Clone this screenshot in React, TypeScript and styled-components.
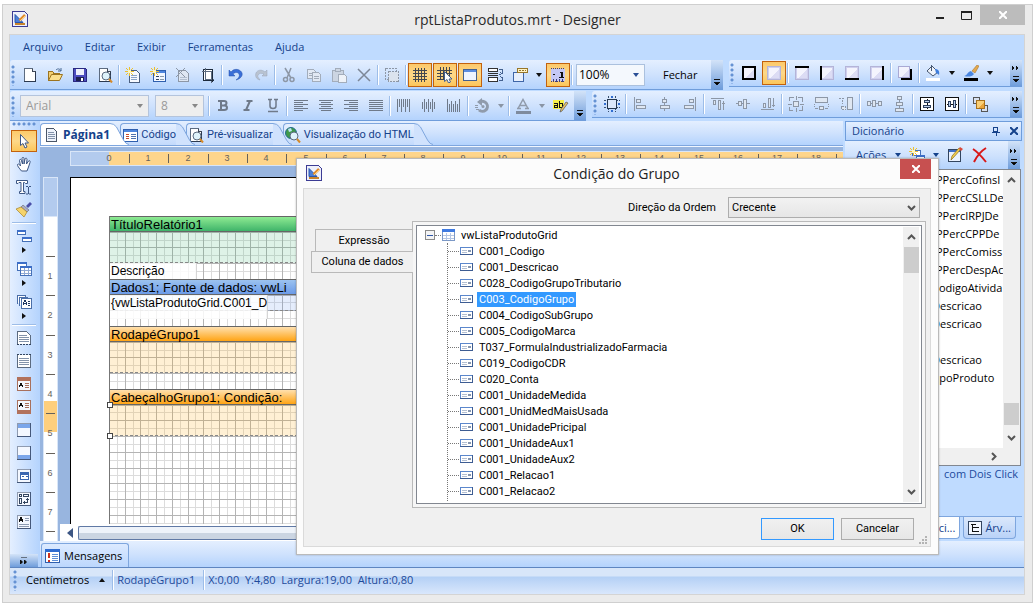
import React from 'react';
import styled, { createGlobalStyle, css } from 'styled-components';

const ui = '"Open Sans", "Noto Sans", sans-serif';
const sans = '"Liberation Sans", Arial, sans-serif';
const navy = '#15428b';
const barFill = 'linear-gradient(#e4efff, #cfe2fd 50%, #b4d3fd)';
const overflowFill = 'linear-gradient(#d3e3f8, #6f9ddb)';

const Global = createGlobalStyle`
  * { box-sizing: border-box; }
  body { margin: 0; background: #fff; font: 11px/16px ${ui}; color: #000; overflow: hidden; }
  button, select { font: inherit; color: inherit; margin: 0; padding: 0; border: 0; background: none; border-radius: 0; }
  svg { display: block; flex: none; }
`;

/* ---------- icons ---------- */

const G = '#8d97a6';
const page = (
  <>
    <path d="M2.5 1.5h8l3 3v10h-11z" fill="#fff" stroke="#5c6b80" />
    <path d="M13.5 4v10.500M2 14.500h12" stroke="#2c3a50" />
    <path d="M10.5 1.5v3h3" fill="#dfe6f2" stroke="#3d4757" />
  </>
);
const star = (
  <>
    <path d="M4.500 0v9M0 4.500h9M1 1l7 7M8 1l-7 7" stroke="#edc02c" fill="none" />
    <rect x="3" y="3" width="3" height="3" fill="#fff6b8" />
  </>
);
const box = (
  <>
    <rect x="2" y="2" width="12" height="12" fill="#cfd0ee" />
    <rect x="3" y="3" width="10" height="10" fill="#f4f4fd" />
    <path d="M13 4v9H4z" fill="#dcdcf4" />
  </>
);
const lens = (
  <>
    <circle cx="9" cy="9" r="4" fill="#dff3fb" stroke="#5c6b80" shapeRendering="auto" />
    <path d="M12 12l3 3.500" stroke="#d58a2a" strokeWidth="2" shapeRendering="auto" />
  </>
);
const lines = (ys: number[][], c: string) => (
  <path d={ys.map(([x, y, w]) => `M${x} ${y}.5h${w}`).join('')} stroke={c} fill="none" />
);
const bars = (xs: number[][], c: string) => (
  <path d={xs.map(([x, y, h]) => `M${x}.5 ${y}v${h}`).join('')} stroke={c} fill="none" />
);
const card = (
  <>
    <rect x="1.500" y="1.500" width="13" height="13" fill="#f4f8ff" stroke="#8f9bb0" />
    <path d="M1 14.500h14M14.500 1v14" stroke="#45587a" />
  </>
);

const icons: Record<string, React.ReactNode> = {
  app: (
    <>
      <path d="M.5 .5h12l3 3v12h-15z" fill="#eef0fb" stroke="#3c3c94" />
      <path d="M3 3.500v8h8z" fill="#4c7fd6" stroke="#2a57ae" shapeRendering="auto" />
      <path d="M7.500 9.500L13 4" stroke="#e08a2c" strokeWidth="2.500" shapeRendering="auto" />
      <path d="M8 10l5-5" stroke="#ffd27c" shapeRendering="auto" />
      <path d="M3 12.500h10" stroke="#c9832b" strokeWidth="2" />
    </>
  ),
  newDoc: page,
  open: (
    <>
      <path d="M1.500 13.500v-9h4l1 1.500h6v3" fill="#f3cf72" stroke="#9c7420" />
      <path d="M1.500 13.500l3-6h11l-3 6z" fill="#fbdf8d" stroke="#9c7420" shapeRendering="auto" />
      <path d="M9 3c2-2 4-1 5 1M14 1v3h-3" stroke="#4b6a93" fill="none" shapeRendering="auto" />
    </>
  ),
  save: (
    <>
      <path d="M1.500 1.500h12l1 1v12h-13z" fill="#4d4dc0" stroke="#2a2a80" />
      <rect x="4" y="2" width="8" height="6" fill="#eef0fc" />
      <rect x="4" y="10" width="8" height="4" fill="#1d2050" />
      <rect x="9" y="11" width="2" height="3" fill="#fff" />
    </>
  ),
  preview: <>{page}{lens}</>,
  newPage: (
    <>
      <path d="M4.500 3.500h7l3 3v9h-10z" fill="#f7faff" stroke="#4a5f80" />
      {lines([[6, 8, 6], [6, 10, 6], [6, 12, 6]], '#8aa4c8')}
      {star}
    </>
  ),
  newForm: (
    <>
      <rect x="3.500" y="3.500" width="12" height="11" fill="#f2f7ff" stroke="#2f5fae" />
      <rect x="4" y="4" width="11" height="2" fill="#4e86de" />
      <path d="M6 9.500h3M6 12.500h3" stroke="#33455f" />
      <path d="M10 9.500h4M10 12.500h4" stroke="#899aaa" />
      {star}
    </>
  ),
  delPage: (
    <>
      <path d="M3.500 3.500h7l3 3v8h-10z" fill="#dfe7f3" stroke={G} />
      {lines([[5, 10, 7], [5, 12, 7]], '#b3bfd0')}
      <path d="M1 1l9 9M10 1l-9 9" stroke={G} shapeRendering="auto" />
    </>
  ),
  pageSetup: (
    <>
      <rect x="3.500" y="2.500" width="9" height="11" fill="#fff" stroke="#1d2a3c" />
      <path d="M5.500 1v13M11.500 4v12M2 4.500h9M5 12.500h9" stroke="#5c6b80" />
      <path d="M12.500 2v13M3 13.500h11" stroke="#1d2a3c" />
    </>
  ),
  undo: (
    <path d="M1 3v6h6l-2-2c2-2 5-2 6 0s0 4-3 6c4-1 7-4 6-7S7 0 3 5z" fill="#3b6fd8" stroke="#2450a8" strokeWidth=".5" shapeRendering="auto" />
  ),
  redo: (
    <path d="M14 3v6H9l2-2C9 6 6 6 5 8s1 3 2 5C3 12 2 9 3 6s6-4 9-1z" fill="#b9c3d1" stroke="#98a3b4" strokeWidth=".5" shapeRendering="auto" />
  ),
  cut: (
    <g fill="none" stroke={G} strokeWidth="1.500" shapeRendering="auto">
      <path d="M4 1l6 10M10 1l-4 10" />
      <circle cx="4.500" cy="12.500" r="2" />
      <circle cx="11" cy="12.500" r="2" />
    </g>
  ),
  copy: (
    <g fill="#e2e9f4" stroke="#a3adbb">
      <path d="M1.500 2.500h6l2 2v7h-8z" />
      <path d="M6.500 5.500h6l2 2v7h-8z" />
      <path d="M8 9.500h5M8 11.500h5M3 6.500h3M3 8.500h3" />
    </g>
  ),
  paste: (
    <g fill="#ccd5e2" stroke="#a3adbb">
      <path d="M1.500 3.500h11v11h-11z" />
      <path d="M4.500 1.500h5v3h-5z" />
      <path d="M7.500 7.500h6l2 2v6h-8z" fill="#eef2f8" />
    </g>
  ),
  del: <path d="M2 2l12 12M14 2L2 14" stroke="#7d8797" strokeWidth="1.500" shapeRendering="auto" />,
  selectAll: (
    <>
      <rect x="1.500" y="1.500" width="11" height="11" fill="none" stroke={G} strokeDasharray="2 1" />
      <rect x="4.500" y="4.500" width="10" height="10" fill="#dbe3ee" stroke={G} strokeDasharray="2 1" />
    </>
  ),
  grid: <path d="M3.500 1v14M6.500 1v14M9.500 1v14M12.500 1v14M1 3.500h14M1 6.500h14M1 9.500h14M1 12.500h14" stroke="#43474f" />,
  gridCursor: (
    <>
      <path d="M3.500 0v13M6.500 0v13M9.500 0v13M12.500 0v9M0 3.500h15M0 6.500h15M0 9.500h13M0 12.500h9" stroke="#43474f" />
      <path d="M7.500 4.500v10l2.500-2 1.500 3.500 2-1-1.500-3h3z" fill="#fff" stroke="#44618f" shapeRendering="auto" />
    </>
  ),
  windowed: (
    <>
      <rect x="1.500" y="2.500" width="13" height="11" fill="#eef4ff" stroke="#44618f" />
      <rect x="2" y="3" width="12" height="2" fill="#5b8de0" />
    </>
  ),
  order: (
    <>
      <rect x="1.500" y="1.500" width="9" height="3" fill="#fff" stroke="#333" />
      <rect x="1.500" y="10.500" width="9" height="4" fill="#fff" stroke="#333" />
      <path d="M1 6.500h10M1 8.500h10" stroke="#333" />
      <path d="M12 2.500h3v4M12 13.500h3v-4M13 5l2 2M13 9l2 2M12 7.500h2" stroke="#44618f" fill="none" />
    </>
  ),
  layers: (
    <>
      <path d="M1.500 5.500h10v9h-10z" fill="#e7effc" stroke="#3f66a8" />
      <rect x="5.500" y="1.500" width="10" height="4" fill="#fff3c4" stroke="#97762a" />
      <path d="M7 3.500h7" stroke="#97762a" strokeDasharray="2 1" />
    </>
  ),
  ruler: (
    <>
      <rect x="1" y="2" width="14" height="12" fill="#c4c8f6" />
      <path d="M1 1.500h14M1 14.500h14" stroke="#3f3f7a" strokeDasharray="1 1" />
      <path d="M3.500 12v3M6.500 12v3M9.500 12v3M12.500 12v3" stroke="#3f3f7a" />
      <path d="M10 5.500h2M9 10.500h5" stroke="#111" />
      <rect x="3" y="7" width="2" height="1" fill="#111" />
      <rect x="11" y="5" width="2" height="6" fill="#111" />
    </>
  ),
  bAll: <>{box}<rect x="2" y="2" width="12" height="12" fill="none" stroke="#000" strokeWidth="2" /></>,
  bNone: <>{box}<rect x="1.500" y="1.500" width="13" height="13" fill="none" stroke="#b4b4d8" /></>,
  bTop: <>{box}<rect x="1.500" y="2.500" width="13" height="12" fill="none" stroke="#b4b4d8" /><rect x="1" y="1" width="14" height="2" /></>,
  bLeft: <>{box}<rect x="1.500" y="1.500" width="13" height="13" fill="none" stroke="#b4b4d8" /><rect x="1" y="1" width="2" height="14" /></>,
  bBottom: <>{box}<rect x="1.500" y="1.500" width="13" height="12" fill="none" stroke="#b4b4d8" /><rect x="1" y="13" width="14" height="2" /></>,
  bRight: <>{box}<rect x="1.500" y="1.500" width="12" height="13" fill="none" stroke="#b4b4d8" /><rect x="13" y="1" width="2" height="14" /></>,
  shadow: (
    <>
      <rect x="4" y="4" width="11" height="11" />
      <rect x="1.500" y="1.500" width="11" height="11" fill="#f3f3fd" stroke="#a9a9d4" />
      <path d="M12 4v8H4z" fill="#dcdcf4" />
    </>
  ),
  fill: (
    <>
      <path d="M2 6l5-5 6 6-5 4z" fill="#f0f4fb" stroke="#46566f" shapeRendering="auto" />
      <path d="M6 0v6" stroke="#46566f" />
      <path d="M10 4c3 0 5 2 4 6-1-1-2-2-3-2z" fill="#3f7edc" shapeRendering="auto" />
      <rect x="1" y="13" width="14" height="3" fill="#fff" />
    </>
  ),
  brushLine: (
    <>
      <path d="M9 6l5-6 2 1-4 7z" fill="#e4a94e" stroke="#9d6a22" strokeWidth=".5" shapeRendering="auto" />
      <path d="M1 11c3 0 3-4 7-5l3 3c-2 3-6 3-10 2z" fill="#4a86e0" shapeRendering="auto" />
      <rect x="1" y="13" width="14" height="3" />
    </>
  ),
  bold: <><path d="M3 3h6M3 12h6M6 3v9" stroke="#6f7a8a" strokeWidth="2" /><path d="M6 3h3q2.500 0 2.500 2T9 7.500H7M9 7.500q3 0 3 2.200T9 12H6" fill="none" stroke="#6f7a8a" strokeWidth="2" shapeRendering="auto" /></>,
  italic: <path d="M6.500 3h6M3.500 12h6M10 3L6 12" stroke="#6f7a8a" strokeWidth="2" shapeRendering="auto" />,
  underline: <path d="M3 1.500h4M9 1.500h4M5 2v6q0 2.500 3 2.500t3-2.500V2M3 13.500h10" fill="none" stroke="#6f7a8a" strokeWidth="1.500" shapeRendering="auto" />,
  alL: lines([[1, 2, 14], [1, 4, 9], [1, 6, 14], [1, 8, 9], [1, 10, 14], [1, 12, 9]], '#6f7a8a'),
  alC: lines([[1, 2, 14], [3, 4, 10], [1, 6, 14], [3, 8, 10], [1, 10, 14], [3, 12, 10]], '#6f7a8a'),
  alR: lines([[1, 2, 14], [6, 4, 9], [1, 6, 14], [6, 8, 9], [1, 10, 14], [6, 12, 9]], '#6f7a8a'),
  alJ: lines([[1, 2, 14], [1, 4, 14], [1, 6, 14], [1, 8, 14], [1, 10, 14], [1, 12, 14]], '#6f7a8a'),
  vT: bars([[1, 1, 13], [3, 1, 8], [5, 1, 13], [7, 1, 8], [9, 1, 13], [11, 1, 8], [13, 1, 13]], '#6f7a8a'),
  vM: bars([[1, 4, 7], [3, 1, 13], [5, 4, 7], [7, 1, 13], [9, 4, 7], [11, 1, 13], [13, 4, 7]], '#6f7a8a'),
  vB: bars([[1, 1, 13], [3, 6, 8], [5, 3, 11], [7, 6, 8], [9, 3, 11], [11, 6, 8], [13, 1, 13]], '#6f7a8a'),
  rotate: (
    <>
      <path d="M6 4a5 5 0 1 1-1 8" fill="none" stroke="#909bab" strokeWidth="3" shapeRendering="auto" />
      <path d="M8 0v8L3 4z" fill="#909bab" shapeRendering="auto" />
      <circle cx="9" cy="8.500" r="1.500" fill="#909bab" shapeRendering="auto" />
      <path d="M1 7.500h3M1 9.500h3M2 11.500h3" stroke="#909bab" />
    </>
  ),
  fontColor: (
    <>
      <path d="M3 10.500l5-9 5 9M5 7.500h6M2 10.500h4M10 10.500h4" fill="none" stroke="#909bab" strokeWidth="1.500" shapeRendering="auto" />
      <rect x="1" y="13" width="15" height="3" fill="#7e8b9e" />
    </>
  ),
  condition: (
    <>
      <rect x="0" y="2" width="11" height="9" fill="#f6f04a" />
      <path d="M1 5.500h3.500v4h-3v-2h3M6.500 3v6.500h3v-4h-3" fill="none" stroke="#111" />
      <path d="M15 5l-6 8-2 1 1-3 5-7z" fill="#e9c36a" stroke="#555" strokeWidth=".7" shapeRendering="auto" />
    </>
  ),
  alignGrid: (
    <>
      <path d="M4.500 0v16M11.500 0v16M0 4.500h16M0 11.500h16" stroke="#38506f" strokeDasharray="2 1" />
      <rect x="3.500" y="3.500" width="9" height="9" fill="#dce8fa" stroke="#26384f" />
      <path d="M7 0h2v2H7zM7 14h2v2H7zM0 7h2v2H0zM14 7h2v2h-2z" fill="#2f6cd0" />
    </>
  ),
  aLeft: <g stroke={G} fill="#dfe7f2"><path d="M2.500 1v14" /><path d="M4.500 3.500h4v3h-4zM4.500 9.500h9v3h-9z" /></g>,
  aCenter: <g stroke={G} fill="#dfe7f2"><path d="M7.500 1v14" /><path d="M5.500 3.500h4v3h-4zM3.500 9.500h9v3h-9z" /></g>,
  aRight: <g stroke={G} fill="#dfe7f2"><path d="M13.500 1v14" /><path d="M7.500 3.500h4v3h-4zM2.500 9.500h9v3h-9z" /></g>,
  aTop: <g stroke={G} fill="#dfe7f2"><path d="M1 2.500h13M13.500 14V5M12 7h3" /><path d="M3.500 4.500h2v4h-2zM8.500 4.500h2v9h-2z" /></g>,
  aMid: <g stroke={G} fill="#dfe7f2"><path d="M1 7.500h14" /><path d="M3.500 5.500h3v4h-3zM8.500 3.500h3v9h-3z" /></g>,
  aBot: <g stroke={G} fill="#dfe7f2"><path d="M1 13.500h13M13.500 2v9M12 9h3" /><path d="M3.500 7.500h2v4h-2zM8.500 2.500h2v9h-2z" /></g>,
  sSize: <g stroke={G} fill="#dfe7f2"><path d="M1.500 5v-3.500h4M10 1.500h4.500v4M14.500 10v4.500h-4M5 14.500h-3.500v-4" fill="none" /><path d="M5.500 5.500h5v5h-5z" /><path d="M0 8h4M12 8h4M8 0v4M8 12v4" /></g>,
  sWidth: <g stroke={G} fill="#dfe7f2"><path d="M2.500 1.500h12v5h-12z" /><path d="M2 12.500h3M12 12.500h3M6.500 10.500h4v3h-4z" /><path d="M1.500 8v3M15.500 8v3" strokeDasharray="1 1" /></g>,
  sHeight: <g stroke={G} fill="#dfe7f2"><path d="M9.500 1.500h5v12h-5z" /><path d="M1 2.500h6M4.500 4v4M3.500 10.500h4v3h-4z" strokeDasharray="2 1" /></g>,
  hSpace: <g stroke={G} fill="#dfe7f2"><path d="M1.500 5.500h3v4h-3zM6.500 4.500h3v6h-3zM12.500 5.500h3v4h-3z" /><path d="M5 7.500h1M10 7.500h2" /></g>,
  vSpace: <g stroke={G} fill="#dfe7f2"><path d="M6.500 .5h4v3h-4zM5.500 6.500h6v3h-6zM4.500 12.500h8v3h-8z" /><path d="M8.500 4v2M8.500 10v2" /></g>,
  cH: <g stroke="#111" fill="#fff"><path d="M1.500 1.500h13v13h-13z" /><path d="M8 3v10" /><path d="M5.500 4.500h5v2h-5zM4.500 9.500h7v2h-7z" fill="#bcd0ee" stroke="#2c3e5c" /></g>,
  cV: <g stroke="#111" fill="#fff"><path d="M1.500 1.500h13v13h-13z" /><path d="M3 8h10" /><path d="M4.500 5.500h2v5h-2zM9.500 4.500h2v7h-2z" fill="#bcd0ee" stroke="#2c3e5c" /></g>,
  front: (
    <>
      <rect x="1.500" y="1.500" width="6" height="6" fill="#d8e1ef" stroke="#555" />
      <rect x="9.500" y="9.500" width="6" height="6" fill="#d8e1ef" stroke="#555" />
      <rect x="4.500" y="4.500" width="8" height="8" fill="#f9cf76" stroke="#a8711c" />
      <path d="M12 6v6H6z" fill="#eaa53a" />
    </>
  ),
  code: (
    <>
      <rect x="1.500" y="2.500" width="14" height="12" fill="#fff" stroke="#2f5fae" />
      <rect x="2" y="3" width="13" height="2" fill="#4e86de" />
      {lines([[4, 7, 3], [4, 9, 3], [4, 11, 3]], '#c74b2c')}
      {lines([[9, 7, 5], [9, 9, 5], [9, 11, 5]], '#4e72b0')}
    </>
  ),
  doc: (
    <>
      <path d="M3.500 1.500h7l3 3v10h-10z" fill="#eef3fb" stroke="#4a5668" />
      {lines([[5, 5, 6], [5, 7, 7], [5, 9, 7], [5, 11, 7]], '#8393aa')}
    </>
  ),
  html: (
    <>
      <circle cx="6" cy="6" r="5.500" fill="#3f9a4b" stroke="#226a8e" shapeRendering="auto" />
      <path d="M3 2l3-1 1 3-3 1zM7 6l3 0 0 3-2 1z" fill="#bfe6f5" shapeRendering="auto" />
      {lens}
    </>
  ),
  cursor: <path d="M4.500 1.500v11l2.500-2 2 4.500 2-1-2-4h3.500z" fill="#fff" stroke="#3c5684" shapeRendering="auto" />,
  hand: <path d="M5.500 15C3 12 1 9.500 1.500 8.500S3.500 8 4.500 10L3.500 4.500C3.500 3 5 3 5.500 4.500L6.500 8 6 2.500C6 1 8 1 8 2.500V8l1-5c.5-1.500 2-1 2 .5L10.500 8l2-3c1-1 2 0 1.500 1.500L12.500 11l-1.500 4z" fill="#fff" stroke="#3c5684" shapeRendering="auto" />,
  text: (
    <g stroke="#3c5684" fill="#fff" shapeRendering="auto">
      <path d="M.5 1.500h11v3h-2l-1-1H7.500v9h1.500v2H3.500v-2H5V3.500H3l-1 1H.5z" />
      <path d="M10 7.500h2M13 7.500h2M12.500 8v7M10 15h2M13 15h2" fill="none" />
    </g>
  ),
  style: (
    <>
      <path d="M10 4l4-4 2 2-4 4z" fill="#4a4fa8" shapeRendering="auto" />
      <path d="M7 3l6 5-2 2-6-5z" fill="#a9adc8" stroke="#555" strokeWidth=".5" shapeRendering="auto" />
      <path d="M5 5l6 5-3 5L0 7z" fill="#f5d36b" stroke="#a58228" strokeWidth=".7" shapeRendering="auto" />
    </>
  ),
  bands: (
    <>
      <rect x="1.500" y="2.500" width="8" height="4" fill="#fff" stroke="#4470b8" />
      <rect x="1" y="2" width="9" height="2" fill="#3c6ec8" />
      <rect x="6.500" y="9.500" width="9" height="4" fill="#fff" stroke="#4470b8" />
      <rect x="6" y="9" width="10" height="2" fill="#3c6ec8" />
    </>
  ),
  tables: (
    <>
      <rect x="1.500" y="1.500" width="9" height="8" fill="#fff" stroke="#4470b8" />
      <rect x="1" y="1" width="10" height="2" fill="#3c6ec8" />
      <rect x="4.500" y="5.500" width="11" height="9" fill="#fff" stroke="#4470b8" />
      <rect x="4" y="5" width="12" height="2" fill="#3c6ec8" />
      <path d="M5 9.500h10M5 12.500h10M8.500 7v7M12.500 7v7" stroke="#8fa9d4" />
    </>
  ),
  comps: (
    <>
      <path d="M1.500 10v-8.500h8v2M3.500 12v-8.500h8v2" fill="#fff" stroke="#4a6ea8" />
      <rect x="5.500" y="4.500" width="10" height="10" fill="#fff" stroke="#4a6ea8" />
      <path d="M7 11l1.500-5h1l1.500 5M8 9.500h3M12 7.500h2M12 9.500h2M12 11.500h2" stroke="#1d3560" fill="none" />
    </>
  ),
  pageHeader: (
    <>
      <path d="M1.500 14v-12.500h9l4 4v8.500" fill="#fff" stroke="#5c6b80" />
      {lines([[3, 5, 8], [3, 7, 10], [3, 9, 10], [3, 11, 10]], '#8393aa')}
      <path d="M1 14.500h14" stroke="#33455f" strokeDasharray="2 1" />
    </>
  ),
  pageFooter: (
    <>
      <path d="M1.500 2v12.500h13V2" fill="#fff" stroke="#5c6b80" />
      {lines([[3, 5, 10], [3, 7, 10], [3, 9, 10], [3, 11, 10]], '#8393aa')}
      <path d="M1 1.500h14" stroke="#33455f" strokeDasharray="2 1" />
    </>
  ),
  titleBand: (
    <>
      {card}
      <rect x="1.500" y="1.500" width="13" height="13" fill="none" stroke="#a8705c" />
      <rect x="1" y="1" width="14" height="4" fill="#b2725c" />
      <path d="M3 11l2-4 2 4M4 9.500h3" stroke="#111" fill="none" />
      {lines([[9, 7, 4], [9, 9, 4], [9, 11, 4]], '#a8705c')}
    </>
  ),
  summaryBand: (
    <>
      {card}
      <rect x="1.500" y="1.500" width="13" height="13" fill="none" stroke="#a8705c" />
      <rect x="1" y="11" width="14" height="4" fill="#b2725c" />
      <path d="M3 8l2-4 2 4M4 6.500h3" stroke="#111" fill="none" />
      {lines([[9, 4, 4], [9, 6, 4], [9, 8, 4]], '#a8705c')}
    </>
  ),
  headBand: <>{card}<rect x="2" y="2" width="12" height="4" fill="#7ba6ea" /></>,
  footBand: <>{card}<rect x="2" y="10" width="12" height="4" fill="#7ba6ea" /></>,
  dataBand: <>{card}<rect x="4.500" y="4.500" width="8" height="7" fill="#fff" stroke="#3a66b0" /><path d="M4 5.500h9" stroke="#3a66b0" strokeWidth="2" /><path d="M6 8.500h2M10 8.500h2" stroke="#3a66b0" /></>,
  crossTab: <>{card}<path d="M3.500 3.500h2v2h-2zM7.500 3.500h5v2h-5zM3.500 7.500h2v5h-2zM8 11.500h3.500v-3M10 9l1.500-1 1.500 1M9 10l-1 1.500 1 1.500" stroke="#33455f" fill="none" /></>,
  textBox: <>{card}<path d="M3 8l2-5 2 5M4 6.500h3" stroke="#111" fill="none" />{lines([[9, 4, 4], [9, 6, 4], [3, 10, 10], [3, 12, 10]], '#8c9ab0')}</>,
  messages: (
    <>
      <rect x="1.500" y="1.500" width="14" height="13" fill="#fff" stroke="#2f5fae" />
      <rect x="1" y="1" width="15" height="3" fill="#2f6cd0" />
      <path d="M5 5v5M5 11.500v2" stroke="#d0321c" strokeWidth="2" />
      {lines([[8, 6, 6], [8, 8, 6], [8, 10, 6], [8, 12, 6]], '#5d8fd8')}
    </>
  ),
  tree: (
    <>
      <rect x="1.500" y="1.500" width="13" height="13" fill="#f4f8ff" stroke="#33455f" />
      <path d="M4 4.500h5M5.500 5v7M6 7.500h6M6 11.500h6" stroke="#111" fill="none" />
    </>
  ),
  newItem: (
    <>
      <rect x="3.500" y="3.500" width="8" height="5" fill="#fff" stroke="#4470b8" />
      <rect x="7.500" y="8.500" width="8" height="6" fill="#fff" stroke="#4470b8" />
      <rect x="7" y="8" width="9" height="2" fill="#3c6ec8" />
      {star}
    </>
  ),
  edit: (
    <>
      <rect x="1.500" y="2.500" width="12" height="12" fill="#eaf2ff" stroke="#33455f" />
      <rect x="2" y="3" width="11" height="2" fill="#3c6ec8" />
      <path d="M14 2l-8 9-2 2 1-4 7-8z" fill="#f4cf4e" stroke="#8a6a18" strokeWidth=".7" shapeRendering="auto" />
      <path d="M13 0l3 2-2 2-2-2z" fill="#d9483a" shapeRendering="auto" />
    </>
  ),
  remove: <path d="M1 2c5 3 9 8 13 13M14 1C9 4 5 9 2 15" stroke="#d81818" strokeWidth="2" fill="none" shapeRendering="auto" />,
  table: (
    <>
      <rect x="1.500" y="2.500" width="12" height="11" fill="#fff" stroke="#7b98c6" />
      <rect x="1" y="2" width="13" height="3" fill="#3f7ae0" />
      <path d="M2 8.500h11M2 11.500h11M5.500 6v7M9.500 6v7" stroke="#b5c6e4" />
    </>
  ),
  field: (
    <>
      <rect x="1.500" y="4.500" width="12" height="7" fill="#fff" stroke="#5b87cc" />
      <path d="M1 11.500h13M13.500 4v8" stroke="#3d5c92" />
      <path d="M3 7.500h5M3 9.500h5" stroke="#b3bfd2" />
      <rect x="9" y="7" width="3" height="2" fill="#8797b0" />
    </>
  ),
};

const Icon = ({ name, size = 16 }: { name: string; size?: number }) => (
  <svg width={size} height={size} viewBox="0 0 16 16" shapeRendering="crispEdges" aria-hidden="true">{icons[name]}</svg>
);
const Caret = ({ color = '#111', dir = 'down' }: { color?: string; dir?: 'down' | 'up' | 'right' }) => (
  <svg width="6" height="6" viewBox="0 0 6 6" aria-hidden="true">
    <path d={{ down: 'M0 1h6L3 5z', up: 'M0 5h6L3 1z', right: 'M1 0v6l4-3z' }[dir]} fill={color} />
  </svg>
);
const Chevron = ({ dir }: { dir: 'up' | 'down' | 'right' }) => (
  <svg width="9" height="9" viewBox="0 0 9 9" aria-hidden="true">
    <path d={{ up: 'M1 6l3.500-3.500L8 6', down: 'M1 3l3.500 3.500L8 3', right: 'M3 1l3.500 3.500L3 8' }[dir]} fill="none" stroke="#555" strokeWidth="2" />
  </svg>
);

/* ---------- window frame ---------- */

const Screen = styled.div`
  height: 100vh;
  padding: 4px 1px 2px 2px;
  position: relative;
`;
const Window = styled.div`
  height: 100%;
  display: flex;
  flex-direction: column;
  background: #ebebeb;
  border: 1px solid #cfcfcf;
  padding: 0 7px 7px 6px;
`;
const TitleBar = styled.header`
  height: 29px;
  display: flex;
  padding-left: 3px;
  flex: none;
`;
const TitleIcon = styled.span`
  padding-top: 6px;
`;
const Title = styled.h1`
  flex: 1;
  margin: 0;
  padding-left: 81px;
  text-align: center;
  font: 14px/30px ${ui};
  color: #2a2a2a;
`;
const WinButton = styled.button<{ $close?: boolean }>`
  width: ${p => (p.$close ? 45 : 27)}px;
  height: 20px;
  display: grid;
  place-items: center;
  background: ${p => (p.$close ? '#bcbcbc' : 'none')};
`;
const Client = styled.div`
  flex: 1;
  min-height: 0;
  display: flex;
  flex-direction: column;
  border: 1px solid #d4d4d4;
  background: #bfdbff;
`;
const MenuBar = styled.nav`
  height: 25px;
  display: flex;
  gap: 22px;
  padding: 4px 13px;
  flex: none;
`;
const MenuLink = styled.a`
  color: ${navy};
  text-decoration: none;
`;

/* ---------- toolbars ---------- */

const ToolbarRow = styled.div`
  display: flex;
  gap: 6px;
  height: 30px;
  padding-right: 2px;
  flex: none;
  & + & { height: 31px; padding-top: 1px; }
`;
const Toolbar = styled.div<{ $grow?: boolean }>`
  display: flex;
  align-items: center;
  height: ${p => (p.$grow ? 27 : 30)}px;
  ${p => p.$grow && 'flex: 1;'}
  background: ${barFill};
  border-bottom: 1px solid #6f9ddb;
  border-radius: 3px 3px 0 0;
`;
const Grip = styled.span<{ $flat?: boolean }>`
  flex: none;
  width: ${p => (p.$flat ? 26 : 8)}px;
  height: ${p => (p.$flat ? 9 : 22)}px;
  background: radial-gradient(circle at 3px 3px, #6592d3 1px, transparent 2px) ${p => (p.$flat ? '0 0 / 5px 9px' : '0 0 / 8px 5px')};
`;
const Tool = styled.button<{ $on?: boolean }>`
  flex: none;
  width: 24px;
  height: 24px;
  margin-right: 1px;
  display: grid;
  place-items: center;
  ${p => p.$on && css`
    background: linear-gradient(#fcc96a, #fdd88a 50%, #fcc65a);
    border: 1px solid #c2620e;
  `}
`;
const Arrow = styled.button`
  flex: none;
  width: 12px;
  height: 24px;
  margin-right: 1px;
  display: grid;
  place-items: center;
`;
const Sep = styled.span`
  flex: none;
  width: 3px;
  height: 20px;
  border-left: 1px solid #9dbde8;
  background: linear-gradient(90deg, #fff 1px, transparent 1px);
`;
const Combo = styled.span<{ $w: number; $off?: boolean }>`
  display: grid;
  align-items: center;
  width: ${p => p.$w}px;
  height: 22px;
  margin: 0 4px 0 2px;
  flex: none;
  border: 1px solid ${p => (p.$off ? '#b4c4dc' : '#abc1de')};
  background: ${p => (p.$off ? '#eeeeee' : '#f4f8fd')};
  color: ${p => (p.$off ? '#9a9a9a' : '#000')};
  font-size: 12px;
  > * { grid-area: 1 / 1; }
  > svg { justify-self: end; margin-right: 5px; pointer-events: none; }
  select { appearance: none; width: 100%; height: 20px; padding-left: ${p => (p.$off ? 5 : 2)}px; opacity: 1; }
`;
const TextTool = styled.button`
  padding: 0 14px;
`;
const Overflow = styled.button`
  width: 12px;
  align-self: stretch;
  margin-left: auto;
  background: ${overflowFill};
  display: flex;
  flex-direction: column;
  align-items: center;
  justify-content: flex-end;
  padding-bottom: 3px;
`;
const OverflowMark = ({ more }: { more?: boolean }) => (
  <svg width="8" height="18" viewBox="0 0 8 18" shapeRendering="crispEdges" aria-hidden="true">
    {more && <path d="M0 1l3 2-3 2zM4 1l3 2-3 2z" fill="#111" />}
    <path d="M1 11.500h6M1 14h6l-3 3z" stroke="#111" strokeWidth="1" />
  </svg>
);

const renderTools = (spec: string) =>
  spec.split(' ').map((t, i) => {
    if (t === '|') return <Sep key={i} />;
    if (t === 'v') return <Arrow key={i} aria-label="Mais"><Caret /></Arrow>;
    if (t === 'x') return <Arrow key={i} aria-label="Mais" disabled><Caret color="#8a95a5" /></Arrow>;
    const on = t.startsWith('*');
    const name = on ? t.slice(1) : t;
    return <Tool key={i} $on={on} aria-label={name}><Icon name={name} /></Tool>;
  });

/* ---------- work area ---------- */

const Work = styled.div`
  flex: 1;
  min-height: 0;
  display: flex;
`;
const Toolbox = styled.aside`
  flex: none;
  width: 30px;
  display: flex;
  flex-direction: column;
  align-items: center;
  padding-right: 2px;
  background: linear-gradient(90deg, #e4efff, #b4d3fd);
`;
const BoxTool = styled(Tool)<{ $tight?: boolean }>`
  width: 26px;
  height: 22px;
  margin: 0 0 ${p => (p.$tight ? 0 : 1)}px;
`;
const BoxArrow = styled.button`
  height: 11px;
  width: 26px;
  display: flex;
  justify-content: center;
  align-items: flex-start;
`;
const BoxSep = styled.span`
  width: 24px;
  height: 3px;
  border-top: 1px solid #9dbde8;
  background: linear-gradient(#fff 1px, transparent 1px);
`;
const BoxOverflow = styled.button`
  width: 28px;
  height: 13px;
  margin-top: auto;
  display: grid;
  place-items: center;
  background: ${overflowFill};
`;
const Main = styled.div`
  flex: 1;
  min-width: 0;
  display: flex;
  flex-direction: column;
`;
const Split = styled.div`
  flex: 1;
  min-height: 0;
  display: flex;
`;
const Documents = styled.section`
  flex: 1;
  min-width: 0;
  display: flex;
  flex-direction: column;
`;
const TabStrip = styled.div`
  flex: none;
  display: flex;
  height: 25px;
  padding-top: 2px;
  background: ${barFill};
  border-bottom: 1px solid #7ea6de;
`;
const DocTab = styled.button<{ $on?: boolean; $z: number }>`
  position: relative;
  z-index: ${p => p.$z};
  display: flex;
  height: 22px;
  margin-right: -9px;
  color: ${navy};
  font: ${p => (p.$on ? `700 12px/20px ${ui}` : '400 11px/20px Roboto, sans-serif')};
`;
const DocTabBody = styled.span<{ $on?: boolean }>`
  display: flex;
  align-items: center;
  gap: ${p => (p.$on ? 4 : 3)}px;
  padding-left: ${p => (p.$on ? 2 : 1)}px;
  height: 22px;
  background: ${p => (p.$on ? '#fff' : 'linear-gradient(#e6f0ff, #c3dafc)')};
  border: solid #7ea6de;
  border-width: 1px 0 0 1px;
  border-radius: 4px 0 0 0;
`;
const Canvas = styled.div`
  flex: 1;
  min-height: 0;
  display: flex;
  padding: 4px 0 0 3px;
  gap: 2px;
  background: #98b5df;
  border-top: 1px solid #f0f6ff;
`;
const VRuler = styled.div`
  flex: none;
  width: 15px;
  margin-top: 26px;
  overflow: hidden;
`;
const CanvasMain = styled.div`
  flex: 1;
  min-width: 0;
  display: flex;
  flex-direction: column;
`;
const HRuler = styled.div`
  flex: none;
  height: 15px;
  margin-left: 10px;
  overflow: hidden;
`;
const Viewport = styled.div`
  flex: 1;
  min-height: 0;
  padding: 11px 0 0 10px;
  overflow: hidden;
`;
const Sheet = styled.div`
  height: 900px;
  padding: 38px 0 0 38px;
  background: #fff;
  border: solid #000;
  border-width: 1px 0 0 1px;
`;
const Surface = styled.div`
  position: relative;
  height: 700px;
  border-left: 1px solid #777;
`;
const GridLines = styled.svg`
  position: absolute;
  inset: 0;
`;
const Bands = styled.div`
  position: relative;
  font-family: ${sans};
`;
const BandHead = styled.div<{ $fill: string }>`
  height: 16px;
  padding-left: 1px;
  border: solid #666;
  border-width: 1px 0;
  background: ${p => p.$fill};
  font-size: 13px;
  line-height: 15px;
  white-space: nowrap;
`;
const BandBody = styled.div<{ $h: number; $tint?: string }>`
  height: ${p => p.$h}px;
  background: ${p => p.$tint ?? 'none'};
  ${p => p.$tint && 'border-bottom: 1px dashed #888;'}
`;
const ReportText = styled.div<{ $w: number; $h: number }>`
  width: ${p => p.$w}px;
  height: ${p => p.$h}px;
  background: rgba(255, 255, 255, .85);
  font-size: 12px;
  line-height: 16px;
  padding-left: 1px;
  white-space: nowrap;
  border-right: 1px solid rgba(120, 120, 120, .3);
`;
const Handle = styled.span`
  position: absolute;
  left: -3px;
  width: 6px;
  height: 6px;
  background: #fff;
  border: 1px solid #444;
  &:first-child { top: -3px; }
  &:last-child { bottom: -3px; }
`;
const Selected = styled.div`
  position: relative;
`;
const DocScroll = styled.div`
  flex: none;
  height: 17px;
  display: flex;
  align-items: center;
  padding-left: 6px;
  gap: 3px;
  background: #fff;
`;
const DocThumb = styled.span`
  flex: 1;
  height: 14px;
  border: 1px solid #6079a5;
  border-right: 0;
  border-radius: 2px 0 0 2px;
  background: linear-gradient(#eef3fa 50%, #cbd5e2 50%);
`;

/* ---------- dictionary ---------- */

const Panel = styled.aside`
  flex: none;
  width: 180px;
  display: flex;
  flex-direction: column;
  padding: 0 2px 0 1px;
  margin-left: 1px;
`;
const PanelHead = styled.div`
  flex: none;
  display: flex;
  align-items: center;
  gap: 10px;
  height: 20px;
  padding: 0 3px 0 6px;
  border: 1px solid #6f9ddb;
  background: ${barFill};
  color: ${navy};
  > :first-child { flex: 1; }
`;
const PanelBar = styled.div`
  flex: none;
  display: flex;
  align-items: center;
  height: 28px;
  padding-left: 11px;
  margin-right: 2px;
  background: ${barFill};
  color: ${navy};
  > :first-child { margin-right: 6px; }
`;
const Listing = styled.div`
  flex: 1;
  min-height: 0;
  margin-right: 1px;
  display: grid;
  grid-template: minmax(0, 1fr) 17px / minmax(0, 1fr) 17px;
  background: #fff;
  border: 1px solid #828790;
`;
const FieldList = styled.ul`
  margin: 0;
  padding: 1px 0 0;
  list-style: none;
  overflow: hidden;
`;
const FieldRow = styled.li<{ $in: number }>`
  height: 18px;
  padding-left: ${p => p.$in}px;
  line-height: 18px;
  white-space: nowrap;
`;
const ScrollTrack = styled.div`
  background: #f0f0f0;
  display: flex;
  flex-direction: column;
  align-items: center;
  padding: 6px 0;
`;
const Thumb = styled.span<{ $h: number; $end?: boolean }>`
  width: 15px;
  height: ${p => p.$h}px;
  margin: ${p => (p.$end ? 'auto 0 8px' : '5px 0 auto')};
  background: #cdcdcd;
`;
const HTrack = styled.div`
  grid-column: span 2;
  background: #f0f0f0;
  display: flex;
  align-items: center;
  justify-content: flex-end;
  padding-right: 22px;
`;
const Hint = styled.p`
  flex: none;
  margin: 0;
  height: 48px;
  padding: 0 4px 0 0;
  text-align: right;
  color: #1c4a9c;
`;
const PanelTabs = styled.div`
  flex: none;
  display: flex;
  justify-content: flex-end;
  gap: 3px;
  height: 25px;
  margin-top: 2px;
  padding-right: 6px;
  border-top: 1px solid #7ea6de;
`;
const PanelTab = styled.button<{ $on?: boolean }>`
  display: flex;
  align-items: center;
  gap: 2px;
  height: 22px;
  padding: 0 4px 0 3px;
  border: 1px solid #7ea6de;
  border-top: 0;
  border-radius: 0 0 4px 4px;
  background: ${p => (p.$on ? '#fff' : 'linear-gradient(#dbe8fb, #b9d2f8)')};
  color: ${navy};
`;

/* ---------- bottom bars ---------- */

const MessageStrip = styled.div`
  flex: none;
  height: 26px;
  padding: 2px 0 0 1px;
  background: ${barFill};
`;
const MessageTab = styled.button`
  display: flex;
  align-items: center;
  gap: 4px;
  height: 24px;
  padding: 0 6px 0 2px;
  border: 1px solid #7ea6de;
  border-bottom: 0;
  border-radius: 3px 3px 0 0;
  background: linear-gradient(#dceaff, #bcd7fd);
`;
const StatusBar = styled.footer`
  flex: none;
  display: flex;
  align-items: center;
  height: 27px;
  padding: 0 2px 2px;
  border-top: 1px solid #5e86c1;
  background: linear-gradient(#d8e6f9 8px, #b4d0f5 9px, #d9e7fc);
  color: #1e4a9a;
`;
const Unit = styled.button`
  display: flex;
  align-items: center;
  gap: 10px;
  margin: 0 7px 0 6px;
  color: #000;
`;
const StatusText = styled.span`
  margin: 0 8px 0 2px;
  white-space: pre;
`;

/* ---------- dialog ---------- */

const Dialog = styled.div`
  position: absolute;
  left: 296px;
  top: 158px;
  width: 643px;
  height: 397px;
  z-index: 20;
  display: flex;
  flex-direction: column;
  padding: 0 7px 7px 6px;
  background: #fcfcfc;
  border: 1px solid #bababa;
  box-shadow: 0 0 2px rgba(0, 0, 0, .25);
`;
const DialogTitle = styled.div`
  flex: none;
  display: flex;
  height: 29px;
  padding-left: 3px;
  > :first-child { padding-top: 6px; }
  h2 { flex: 1; margin: 0; padding-left: 11px; font: 14px/29px ${ui}; text-align: center; color: #222; }
`;
const CloseButton = styled.button`
  width: 31px;
  height: 20px;
  display: grid;
  place-items: center;
  background: #c75050;
`;
const DialogBody = styled.div`
  flex: 1;
  min-height: 0;
  display: flex;
  flex-direction: column;
  padding: 8px 4px 6px 7px;
  border: 1px solid #dadada;
  background: #f0f0f0;
  font: 11px/16px Roboto, ${sans};
`;
const OrderRow = styled.div`
  display: flex;
  justify-content: flex-end;
  align-items: center;
  gap: 12px;
  padding-right: 6px;
`;
const OrderSelect = styled.span`
  display: grid;
  align-items: center;
  width: 192px;
  height: 21px;
  border: 1px solid #adadad;
  background: linear-gradient(#f2f2f2, #e6e6e6);
  > * { grid-area: 1 / 1; }
  > svg { justify-self: end; margin-right: 3px; pointer-events: none; }
  select { appearance: none; width: 100%; height: 19px; padding-left: 3px; }
`;
const DialogMain = styled.div`
  flex: 1;
  min-height: 0;
  margin-top: 3px;
  display: flex;
`;
const SideTabs = styled.div`
  flex: none;
  width: 102px;
  margin-right: -1px;
  padding-top: 8px;
  display: flex;
  flex-direction: column;
  align-items: flex-end;
  z-index: 1;
`;
const SideTab = styled.button<{ $on?: boolean }>`
  width: ${p => (p.$on ? 102 : 97)}px;
  height: 22px;
  margin-right: ${p => (p.$on ? 0 : 1)}px;
  border: solid #b9b9b9;
  border-width: ${p => (p.$on ? '1px 0 1px 1px' : '1px 0 0 1px')};
  background: #f0f0f0;
`;
const TreeFrame = styled.div`
  flex: 1;
  padding: 3px;
  display: flex;
  border: 1px solid #b9b9b9;
  background: #f6f6f6;
`;
const TreeBox = styled.div`
  flex: 1;
  min-height: 0;
  display: flex;
  padding: 1px;
  border: 1px solid #828790;
  background: #fff;
  > ${ScrollTrack} { width: 16px; margin-right: 1px; }
`;
const Tree = styled.ul`
  flex: 1;
  margin: 0;
  padding: 0 0 0 7px;
  list-style: none;
  overflow: hidden;
  ul { margin: 0 0 0 22px; padding: 0; list-style: none; border-left: 1px dotted #777; }
`;
const TreeRow = styled.span<{ $root?: boolean }>`
  display: flex;
  align-items: center;
  height: 16px;
  &::before {
    content: '';
    order: ${p => (p.$root ? 1 : 0)};
    width: ${p => (p.$root ? 6 : 11)}px;
    border-top: 1px dotted #777;
  }
  > svg:last-of-type { order: 2; }
`;
const TreeText = styled.span<{ $on?: boolean }>`
  order: 3;
  margin-left: 2px;
  padding: 0 2px;
  line-height: 15px;
  ${p => p.$on && 'background: #3399ff; color: #fff;'}
`;
const DialogFooter = styled.div`
  flex: none;
  display: flex;
  justify-content: flex-end;
  gap: 7px;
  padding: 10px 12px 0 0;
  position: relative;
`;
const PushButton = styled.button<{ $main?: boolean }>`
  width: 73px;
  height: 22px;
  border: 1px solid ${p => (p.$main ? '#3399ff' : '#acacac')};
  background: linear-gradient(#f0f0f0, #e6e6e6);
`;
const SizeGrip = styled.svg`
  position: absolute;
  right: -2px;
  bottom: -5px;
`;

/* ---------- data ---------- */

const CM = 39.3;
const fields = [
  'C001_Codigo', 'C001_Descricao', 'C028_CodigoGrupoTributario', 'C003_CodigoGrupo', 'C004_CodigoSubGrupo',
  'C005_CodigoMarca', 'T037_FormulaIndustrializadoFarmacia', 'C019_CodigoCDR', 'C020_Conta', 'C001_UnidadeMedida',
  'C001_UnidMedMaisUsada', 'C001_UnidadePricipal', 'C001_UnidadeAux1', 'C001_UnidadeAux2', 'C001_Relacao1',
  'C001_Relacao2', 'C001_PesoMedio',
];
const dictionary: [string, number][] = [
  ['PPercCofinsI', 90], ['PPercCSLLDe', 90], ['PPercIRPJDe', 90], ['PPercCPPDe', 90], ['PPercComiss', 90],
  ['PPercDespAc', 90], ['CodigoAtivida', 86], ['Descricao', 86], ['Descricao', 86], ['', 86], ['Descricao', 86], ['GrupoProduto', 74],
];
const orange = 'linear-gradient(#ffe0ae, #ffa414)';

const HorizontalRuler = () => (
  <svg width="2000" height="15" shapeRendering="crispEdges">
    <rect width="2000" height="15" fill="#d9e6f8" />
    <rect x="1" y="1" width="38" height="13" fill="#b3cbee" />
    <rect x="39" y="1" width="1960" height="13" fill="#fed58b" />
    {Array.from({ length: 19 }, (_, i) => (
      <g key={i} fill="#66615a">
        <text x={Math.round(39 + i * CM)} y="10" textAnchor="middle" fontFamily="Liberation Sans" fontSize="9">{i}</text>
        <rect x={Math.round(59 + i * CM)} y="3" width="1" height="9" />
      </g>
    ))}
  </svg>
);
const VerticalRuler = () => (
  <svg width="15" height="900" shapeRendering="crispEdges">
    <rect width="15" height="900" fill="#d9e6f8" />
    <rect x="1" y="1" width="13" height="38" fill="#b3cbee" />
    <rect x="1" y="40" width="13" height="860" fill="#fff" />
    <rect x="1" y="224" width="13" height="31" fill="#fecf7d" />
    {Array.from({ length: 8 }, (_, i) => (
      <g key={i} fill="#66615a">
        {i < 7 && <text x="7" y={Math.round(102 + i * CM)} textAnchor="middle" fontFamily="Liberation Sans" fontSize="9">{i + 1}</text>}
        <rect x="3" y={Math.round(79 + i * CM)} width="9" height="1" />
      </g>
    ))}
  </svg>
);
const SurfaceGrid = () => {
  const at = Array.from({ length: 240 }, (_, i) => ({ p: Math.round((i + 1) * CM / 5), major: i % 2 === 1 }));
  const color = (m: boolean) => (m ? '#b4b4b4' : '#dcdcdc');
  return (
    <GridLines width="1900" height="700" shapeRendering="crispEdges">
      {[false, true].map(m => at.filter(l => l.major === m).map(l => (
        <g key={l.p} fill={color(m)}>
          <rect x={l.p - 1} y="0" width="1" height="700" />
          <rect x="0" y={l.p} width="1900" height="1" />
        </g>
      )))}
    </GridLines>
  );
};

const DocumentTab = ({ icon, children, on, z }: { icon: string; children: string; on?: boolean; z: number }) => (
  <DocTab $on={on} $z={z}>
    <DocTabBody $on={on}><Icon name={icon} /><span>{children}</span></DocTabBody>
    <svg width="19" height="22" viewBox="0 0 19 22">
      <path d="M0 .5Q4 .5 6.500 4L13.500 17Q16 21.500 19 21.500V22H0z" fill={on ? '#fff' : '#d0e2fd'} />
      <path d="M0 .5Q4 .5 6.500 4L13.500 17Q16 21.500 19 21.500" fill="none" stroke="#7ea6de" />
    </svg>
  </DocTab>
);

const Cross = ({ color, size = 8, w = 2 }: { color: string; size?: number; w?: number }) => (
  <svg width={size} height={size} viewBox="0 0 8 8"><path d="M0 0l8 8M8 0L0 8" stroke={color} strokeWidth={w} /></svg>
);

export default function App() {
  return (
    <Screen>
      <Global />
      <Window>
        <TitleBar>
          <TitleIcon><Icon name="app" /></TitleIcon>
          <Title>rptListaProdutos.mrt - Designer</Title>
          <WinButton aria-label="Minimizar"><svg width="8" height="10"><rect y="7" width="8" height="2" fill="#222" /></svg></WinButton>
          <WinButton aria-label="Maximizar"><svg width="11" height="9"><path d="M.5 1h10v7.500H.5z" fill="none" stroke="#222" /><rect width="11" height="2" fill="#222" /></svg></WinButton>
          <WinButton $close aria-label="Fechar"><Cross color="#fff" /></WinButton>
        </TitleBar>
        <Client>
          <MenuBar>
            {['Arquivo', 'Editar', 'Exibir', 'Ferramentas', 'Ajuda'].map(m => <MenuLink key={m} href="#">{m}</MenuLink>)}
          </MenuBar>
          <ToolbarRow>
            <Toolbar>
              <Grip />
              {renderTools('newDoc open save preview | newPage newForm delPage pageSetup | undo redo | cut copy paste del | selectAll | *grid *gridCursor *windowed order layers v *ruler |')}
              <Combo $w={69}>
                <select aria-label="Zoom" defaultValue="100%"><option>100%</option></select>
                <Caret color="#2a4f96" />
              </Combo>
              <TextTool>Fechar</TextTool>
              <Overflow aria-label="Mais botões"><OverflowMark /></Overflow>
            </Toolbar>
            <Toolbar $grow>
              <Grip />
              {renderTools('bAll *bNone | bTop bLeft bBottom bRight | shadow | fill v brushLine v')}
              <Overflow aria-label="Mais botões"><OverflowMark more /></Overflow>
            </Toolbar>
          </ToolbarRow>
          <ToolbarRow>
            <Toolbar>
              <Grip />
              <Combo $w={129} $off>
                <select aria-label="Fonte" disabled defaultValue="Arial"><option>Arial</option></select>
                <Caret color="#888" />
              </Combo>
              <Combo $w={49} $off>
                <select aria-label="Tamanho" disabled defaultValue="8"><option>8</option></select>
                <Caret color="#888" />
              </Combo>
              {renderTools('| bold italic underline | alL alC alR alJ | vT vM vB | rotate x | fontColor x condition')}
              <Overflow aria-label="Mais botões"><OverflowMark /></Overflow>
            </Toolbar>
            <Toolbar $grow>
              <Grip />
              {renderTools('alignGrid | aLeft aCenter aRight | aTop aMid aBot | sSize sWidth sHeight | hSpace vSpace | cH cV | front')}
              <Overflow aria-label="Mais botões"><OverflowMark more /></Overflow>
            </Toolbar>
          </ToolbarRow>
          <Work>
            <Toolbox>
              <Grip $flat />
              <BoxTool $on aria-label="Selecionar"><Icon name="cursor" /></BoxTool>
              <BoxTool aria-label="Mão"><Icon name="hand" /></BoxTool>
              <BoxTool aria-label="Texto"><Icon name="text" /></BoxTool>
              <BoxTool aria-label="Estilo"><Icon name="style" /></BoxTool>
              <BoxSep />
              {['bands', 'tables', 'comps'].map(n => (
                <React.Fragment key={n}>
                  <BoxTool $tight aria-label={n}><Icon name={n} /></BoxTool>
                  <BoxArrow aria-label="Mais"><Caret dir="right" /></BoxArrow>
                </React.Fragment>
              ))}
              <BoxSep />
              {['pageHeader', 'pageFooter', 'titleBand', 'summaryBand', 'headBand', 'footBand', 'dataBand', 'crossTab', 'textBox'].map(n => (
                <BoxTool key={n} aria-label={n}><Icon name={n} /></BoxTool>
              ))}
              <BoxOverflow aria-label="Mais botões">
                <svg width="8" height="8" shapeRendering="crispEdges"><path d="M1 .5h6M0 3l3 2-3 2zM4 3l3 2-3 2z" fill="#111" stroke="#111" strokeWidth=".5" /></svg>
              </BoxOverflow>
            </Toolbox>
            <Main>
              <Split>
                <Documents>
                  <TabStrip>
                    <DocumentTab icon="doc" on z={4}>Página1</DocumentTab>
                    <DocumentTab icon="code" z={3}>Código</DocumentTab>
                    <DocumentTab icon="preview" z={2}>Pré-visualizar</DocumentTab>
                    <DocumentTab icon="html" z={1}>Visualização do HTML</DocumentTab>
                  </TabStrip>
                  <Canvas>
                    <VRuler><VerticalRuler /></VRuler>
                    <CanvasMain>
                      <HRuler><HorizontalRuler /></HRuler>
                      <Viewport>
                        <Sheet>
                          <Surface>
                            <SurfaceGrid />
                            <Bands>
                              <BandHead $fill="linear-gradient(#8eea92, #3fb46a)">TítuloRelatório1</BandHead>
                              <BandBody $h={31} $tint="rgba(60, 179, 113, .17)" />
                              <BandBody $h={16}><ReportText $w={87} $h={16}>Descrição</ReportText></BandBody>
                              <BandHead $fill="linear-gradient(#9cc3f0, #6c9be8)">Dados1; Fonte de dados: vwLi</BandHead>
                              <BandBody $h={16} $tint="rgba(100, 149, 237, .17)"><ReportText $w={158} $h={24}>{'{vwListaProdutoGrid.C001_D'}</ReportText></BandBody>
                              <BandBody $h={15} />
                              <BandHead $fill={orange}>RodapéGrupo1</BandHead>
                              <BandBody $h={31} $tint="rgba(255, 165, 0, .17)" />
                              <BandBody $h={16} />
                              <BandHead $fill={orange}>CabeçalhoGrupo1; Condição:</BandHead>
                              <Selected>
                                <Handle />
                                <BandBody $h={31} $tint="rgba(255, 165, 0, .17)" />
                                <Handle />
                              </Selected>
                            </Bands>
                          </Surface>
                        </Sheet>
                      </Viewport>
                      <DocScroll>
                        <svg width="9" height="10"><path d="M7 0v10L1 5z" fill="#3c5684" /></svg>
                        <DocThumb />
                      </DocScroll>
                    </CanvasMain>
                  </Canvas>
                </Documents>
                <Panel>
                  <PanelHead>
                    <span>Dicionário</span>
                    <svg width="8" height="9" shapeRendering="crispEdges"><path d="M1.500 .5h4v4h-4zM0 5.500h8M4 6v3M5.500 0v5" fill="none" stroke={navy} /></svg>
                    <Cross color={navy} />
                  </PanelHead>
                  <PanelBar>
                    <span>Ações</span>
                    <Arrow aria-label="Ações"><Caret color={navy} /></Arrow>
                    <Tool aria-label="Novo item"><Icon name="newItem" /></Tool>
                    <Arrow aria-label="Mais"><Caret color={navy} /></Arrow>
                    <Tool aria-label="Editar"><Icon name="edit" /></Tool>
                    <Tool aria-label="Excluir"><Icon name="remove" /></Tool>
                    <Overflow aria-label="Mais botões"><OverflowMark more /></Overflow>
                  </PanelBar>
                  <Listing>
                    <FieldList>
                      {dictionary.map(([name, indent], i) => <FieldRow key={i} $in={indent}>{name}</FieldRow>)}
                    </FieldList>
                    <ScrollTrack><Chevron dir="up" /><Thumb $h={22} $end /><Chevron dir="down" /></ScrollTrack>
                    <HTrack><Chevron dir="right" /></HTrack>
                  </Listing>
                  <Hint>com Dois Click</Hint>
                  <PanelTabs>
                    <PanelTab $on>Dici...</PanelTab>
                    <PanelTab><Icon name="tree" />Árv...</PanelTab>
                  </PanelTabs>
                </Panel>
              </Split>
              <MessageStrip>
                <MessageTab><Icon name="messages" />Mensagens</MessageTab>
              </MessageStrip>
            </Main>
          </Work>
          <StatusBar>
            <Grip />
            <Unit>Centímetros<Caret dir="up" /></Unit>
            <Sep />
            <StatusText>RodapéGrupo1</StatusText>
            <Sep />
            <StatusText>X:0,00  Y:4,80  Largura:19,00  Altura:0,80</StatusText>
          </StatusBar>
        </Client>
      </Window>

      <Dialog role="dialog" aria-label="Condição do Grupo">
        <DialogTitle>
          <span><Icon name="app" /></span>
          <h2>Condição do Grupo</h2>
          <CloseButton aria-label="Fechar"><Cross color="#fff" /></CloseButton>
        </DialogTitle>
        <DialogBody>
          <OrderRow>
            <label htmlFor="order">Direção da Ordem</label>
            <OrderSelect>
              <select id="order" defaultValue="Crecente"><option>Crecente</option></select>
              <Chevron dir="down" />
            </OrderSelect>
          </OrderRow>
          <DialogMain>
            <SideTabs>
              <SideTab>Expressão</SideTab>
              <SideTab $on>Coluna de dados</SideTab>
            </SideTabs>
            <TreeFrame>
              <TreeBox>
                <Tree>
                  <li>
                    <TreeRow $root>
                      <svg width="10" height="10" shapeRendering="crispEdges"><rect x=".5" y=".5" width="9" height="9" fill="#f4f4f4" stroke="#8a8a8a" /><path d="M2 5h6" stroke="#2f57a8" /></svg>
                      <Icon name="table" />
                      <TreeText>vwListaProdutoGrid</TreeText>
                    </TreeRow>
                    <ul>
                      {fields.map(f => (
                        <li key={f}>
                          <TreeRow><Icon name="field" /><TreeText $on={f === 'C003_CodigoGrupo'}>{f}</TreeText></TreeRow>
                        </li>
                      ))}
                    </ul>
                  </li>
                </Tree>
                <ScrollTrack><Chevron dir="up" /><Thumb $h={26} /><Chevron dir="down" /></ScrollTrack>
              </TreeBox>
            </TreeFrame>
          </DialogMain>
          <DialogFooter>
            <PushButton $main>OK</PushButton>
            <PushButton>Cancelar</PushButton>
            <SizeGrip width="9" height="9"><path d="M6 0h2v2H6zM6 3h2v2H6zM6 6h2v2H6zM3 3h2v2H3zM3 6h2v2H3zM0 6h2v2H0z" fill="#b4b4b4" /></SizeGrip>
          </DialogFooter>
        </DialogBody>
      </Dialog>
    </Screen>
  );
}
